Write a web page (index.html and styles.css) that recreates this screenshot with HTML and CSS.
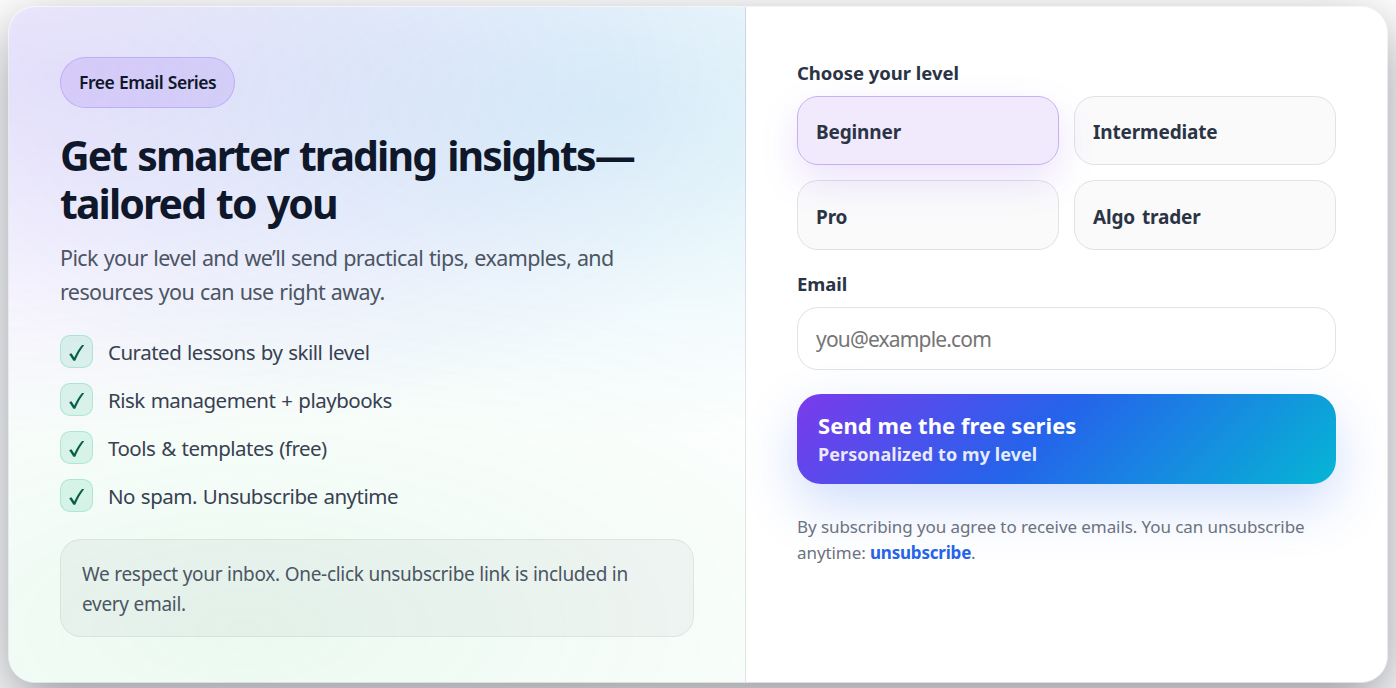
FILE: index.html
```html
<!DOCTYPE html>
<html lang="en">
<head>
<meta charset="UTF-8">
<meta name="viewport" content="width=device-width, initial-scale=1.0">
<link rel="stylesheet" href="styles.css">
<title>Free Email Series</title>
</head>
<body>
<main class="card">
<section class="intro">
<span class="badge">Free Email Series</span>
<h1 class="title">Get smarter trading insights—<br>tailored to you</h1>
<p class="lead">Pick your level and we’ll send practical tips, examples, and<br>resources you can use right away.</p>
<ul class="list">
<li><span class="tick"><svg viewBox="0 0 18 18"><path d="M1.2 10.2 3.4 9.2 6.3 13.4C8.5 8.5 11 4.2 14 .9L16.2 .9C12.6 5.8 9.5 11 7.2 16.8L5.4 16.8Z"/></svg></span><span class="item">Curated lessons by skill level</span></li>
<li><span class="tick"><svg viewBox="0 0 18 18"><path d="M1.2 10.2 3.4 9.2 6.3 13.4C8.5 8.5 11 4.2 14 .9L16.2 .9C12.6 5.8 9.5 11 7.2 16.8L5.4 16.8Z"/></svg></span><span class="item">Risk management + playbooks</span></li>
<li><span class="tick"><svg viewBox="0 0 18 18"><path d="M1.2 10.2 3.4 9.2 6.3 13.4C8.5 8.5 11 4.2 14 .9L16.2 .9C12.6 5.8 9.5 11 7.2 16.8L5.4 16.8Z"/></svg></span><span class="item">Tools &amp; templates (free)</span></li>
<li><span class="tick"><svg viewBox="0 0 18 18"><path d="M1.2 10.2 3.4 9.2 6.3 13.4C8.5 8.5 11 4.2 14 .9L16.2 .9C12.6 5.8 9.5 11 7.2 16.8L5.4 16.8Z"/></svg></span><span class="item">No spam. Unsubscribe anytime</span></li>
</ul>
<p class="note">We respect your inbox. One-click unsubscribe link is included in<br>every email.</p>
</section>
<form class="form">
<div class="label">Choose your level</div>
<div class="levels">
<button type="button" class="level is-active">Beginner</button>
<button type="button" class="level">Intermediate</button>
<button type="button" class="level">Pro</button>
<button type="button" class="level">Algo trader</button>
</div>
<label class="label" for="email">Email</label>
<input class="input" id="email" type="email" placeholder="you@example.com">
<button type="submit" class="submit">
<span class="submit-main">Send me the free series</span>
<span class="submit-sub">Personalized to my level</span>
</button>
<p class="legal">By subscribing you agree to receive emails. You can unsubscribe<br>anytime: <a href="#">unsubscribe</a>.</p>
</form>
</main>
</body>
</html>
```
FILE: styles.css
```css
* {
box-sizing: border-box;
}
html,
body {
height: 100%;
margin: 0;
overflow: hidden;
}
body {
padding: 6px 8px 5px;
background: #fff;
color: #0f172a;
font-family: "Noto Sans", "Open Sans", sans-serif;
}
button,
input {
font-family: inherit;
}
h1,
p,
ul {
margin: 0;
padding: 0;
}
.card {
display: grid;
grid-template-columns: 737px 1fr;
height: 677px;
border: 1px solid rgba(255, 255, 255, 0.6);
border-radius: 27px;
background: #fff;
background-clip: padding-box;
box-shadow: 0 20px 60px rgba(2, 6, 23, 0.42);
overflow: hidden;
}
.intro {
display: flex;
flex-direction: column;
align-items: flex-start;
padding: 50px 51px 0;
border-right: 1px solid rgba(15, 23, 42, 0.09);
background:
radial-gradient(780px 370px at 6% 10%, rgba(124, 58, 237, 0.15), transparent),
radial-gradient(760px 330px at 80% 15%, rgba(6, 165, 212, 0.15), transparent),
radial-gradient(780px 360px at 32% 92%, rgba(34, 197, 94, 0.09), transparent),
#fff;
}
.badge {
width: 175px;
height: 51px;
padding: 0 18px;
border: 1px solid rgba(124, 58, 237, 0.22);
border-radius: 26px;
background: rgba(124, 58, 237, 0.12);
font-size: 17.5px;
font-weight: 600;
line-height: 49px;
letter-spacing: -0.5px;
word-spacing: 0.7px;
white-space: nowrap;
}
.title {
margin-top: 23px;
font-size: 41px;
font-weight: 700;
line-height: 48px;
letter-spacing: -1.9px;
word-spacing: 2.2px;
white-space: nowrap;
}
.lead {
margin-top: 14px;
color: #4b5563;
font-size: 21.5px;
line-height: 34px;
letter-spacing: -0.6px;
word-spacing: 0.8px;
white-space: nowrap;
}
.list {
display: flex;
flex-direction: column;
gap: 15px;
margin-top: 26px;
list-style: none;
}
.list li {
display: flex;
gap: 15px;
height: 33px;
}
.tick {
display: flex;
align-items: center;
justify-content: center;
width: 33px;
height: 33px;
padding-top: 2px;
border: 1px solid rgba(16, 185, 129, 0.22);
border-radius: 10px;
background: rgba(16, 185, 129, 0.13);
}
.tick svg {
width: 18px;
height: 18px;
fill: #065f46;
}
.item {
color: #374151;
font-size: 20.5px;
line-height: 34px;
letter-spacing: -0.5px;
word-spacing: 1px;
white-space: nowrap;
}
.note {
width: 634px;
height: 98px;
margin-top: 27px;
padding: 19px 21px;
border: 1px solid rgba(15, 23, 42, 0.07);
border-radius: 21px;
background: rgba(15, 23, 42, 0.04);
color: #4b5563;
font-size: 19px;
line-height: 30px;
letter-spacing: -0.3px;
word-spacing: 0.2px;
white-space: nowrap;
}
.form {
display: flex;
flex-direction: column;
padding: 50px 51px 0;
}
.label {
height: 39px;
color: #2b3445;
font-size: 18.5px;
font-weight: 700;
line-height: 31px;
letter-spacing: -0.05px;
}
.levels {
display: grid;
grid-template-columns: 1fr 1fr;
grid-template-rows: 69px 70px;
gap: 15px;
margin-bottom: 18px;
}
.level {
padding: 3px 18px 0;
border: 1px solid rgba(15, 23, 42, 0.11);
border-radius: 21px;
background: rgba(15, 23, 42, 0.02);
color: #2b3445;
font-size: 19px;
font-weight: 700;
letter-spacing: -0.15px;
word-spacing: 2px;
text-align: left;
}
.level.is-active {
border-color: #c8b0f0;
background: #f1eafd;
box-shadow: 0 15px 38px rgba(124, 58, 237, 0.15);
}
.input {
height: 63px;
padding: 0 18px;
border: 1px solid rgba(15, 23, 42, 0.12);
border-radius: 21px;
background: #fff;
font-size: 21px;
letter-spacing: -0.83px;
}
.input::placeholder {
color: #757575;
}
.submit {
display: flex;
flex-direction: column;
justify-content: center;
height: 90px;
margin-top: 24px;
padding: 0 21px;
border: 0;
border-radius: 24px;
background: linear-gradient(135deg, #7c3aed, #2563eb 45%, #06b6d4);
box-shadow: 0 21px 53px rgba(37, 99, 235, 0.22);
color: #fff;
text-align: left;
}
.submit-main {
font-size: 22px;
font-weight: 700;
line-height: 30px;
letter-spacing: 0.07px;
}
.submit-sub {
font-size: 18px;
font-weight: 700;
line-height: 28px;
letter-spacing: 0.07px;
opacity: 0.88;
}
.legal {
margin-top: 30px;
color: #6b7280;
font-size: 17px;
line-height: 26px;
letter-spacing: -0.08px;
white-space: nowrap;
}
.legal a {
color: #2563eb;
font-weight: 700;
letter-spacing: -0.2px;
text-decoration: none;
}
```
